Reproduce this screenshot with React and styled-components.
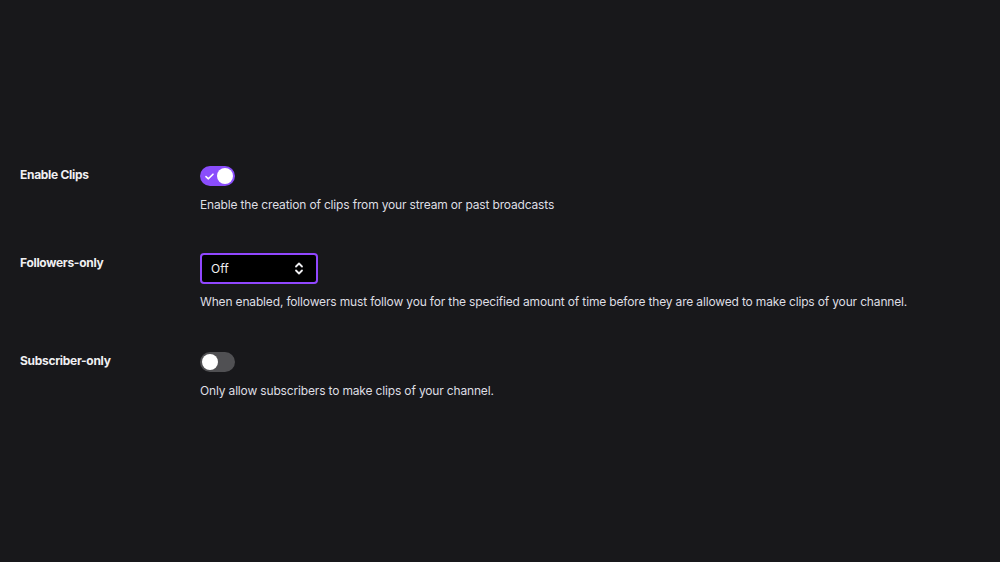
import React, { useState } from "react";
import styled, { createGlobalStyle } from "styled-components";

const Global = createGlobalStyle`
  html, body { margin: 0; padding: 0; background: #18181b; }
  body { font-family: Inter, "Noto Sans", sans-serif; color: #efeff1; }
`;

const Page = styled.div`
  width: 1000px;
  height: 562px;
  box-sizing: border-box;
  padding: 159px 20px 0 20px;
  background: #18181b;
  display: flex;
  flex-direction: column;
  gap: 35px;
`;

const Row = styled.div`
  display: grid;
  grid-template-columns: 180px 1fr;
  align-items: start;
`;

const Label = styled.div`
  font-size: 12px;
  font-weight: 700;
  letter-spacing: -0.3px;
  color: #efeff1;
  line-height: 16px;
  padding-top: ${(p) => p.$pt || 8}px;
`;

const Control = styled.div`
  display: flex;
  flex-direction: column;
  align-items: flex-start;
  gap: 10px;
`;

const Desc = styled.div`
  font-size: 12px;
  line-height: 16px;
  letter-spacing: -0.16px;
  color: #dedee3;
`;

const ToggleTrack = styled.button`
  position: relative;
  width: 35px;
  height: 20px;
  margin: 7px 0 1px 0;
  border: none;
  border-radius: 10px;
  padding: 0;
  cursor: pointer;
  background: ${(p) => (p.$on ? "#8a4dfc" : "#505053")};
`;

const Knob = styled.span`
  position: absolute;
  top: 2px;
  left: ${(p) => (p.$on ? "17px" : "2px")};
  width: 16px;
  height: 16px;
  border-radius: 50%;
  background: #ffffff;
`;

const Check = styled.svg`
  position: absolute;
  left: 5px;
  top: 6.5px;
`;

const SelectBox = styled.div`
  width: 118px;
  height: 31px;
  margin-top: 5px;
  box-sizing: border-box;
  border: 2px solid #9147ff;
  border-radius: 4px;
  background: #000000;
  display: flex;
  align-items: center;
  justify-content: space-between;
  padding: 0 12px 0 9px;
  font-size: 12px;
  color: #efeff1;
`;

function Toggle({ on, onClick }) {
  return (
    <ToggleTrack $on={on} onClick={onClick}>
      {on && (
        <Check width="9" height="7" viewBox="0 0 9 7" fill="none">
          <path d="M1 3.6 L3.4 5.8 L8 1.2" stroke="#fff" strokeWidth="1.6" strokeLinecap="round" strokeLinejoin="round" />
        </Check>
      )}
      <Knob $on={on} />
    </ToggleTrack>
  );
}

export default function App() {
  const [clips, setClips] = useState(true);
  const [subs, setSubs] = useState(false);
  return (
    <>
      <Global />
      <Page>
        <Row>
          <Label $pt={8}>Enable Clips</Label>
          <Control>
            <Toggle on={clips} onClick={() => setClips(!clips)} />
            <Desc>Enable the creation of clips from your stream or past broadcasts</Desc>
          </Control>
        </Row>
        <Row>
          <Label $pt={7}>Followers-only</Label>
          <Control>
            <SelectBox>
              <span>Off</span>
              <svg width="10" height="13" viewBox="0 0 10 13" fill="none">
                <path d="M2 4.5 L5 1.5 L8 4.5 M2 8.5 L5 11.5 L8 8.5" stroke="#efeff1" strokeWidth="1.8" strokeLinecap="round" strokeLinejoin="round" />
              </svg>
            </SelectBox>
            <Desc>When enabled, followers must follow you for the specified amount of time before they are allowed to make clips of your channel.</Desc>
          </Control>
        </Row>
        <Row>
          <Label $pt={8}>Subscriber-only</Label>
          <Control>
            <Toggle on={subs} onClick={() => setSubs(!subs)} />
            <Desc>Only allow subscribers to make clips of your channel.</Desc>
          </Control>
        </Row>
      </Page>
    </>
  );
}
